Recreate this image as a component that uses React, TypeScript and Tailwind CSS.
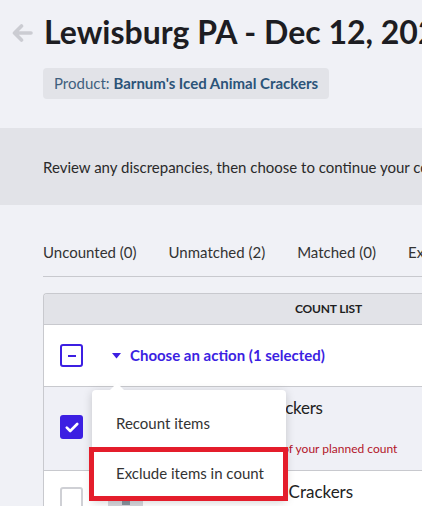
const tabs = ["Uncounted (0)", "Unmatched (2)", "Matched (0)", "Excluded (0)"];

function Check() {
  return (
    <svg width="14" height="11" viewBox="0 0 14 11" fill="none">
      <path d="M1.8 5.6 5.2 9 12.2 2" stroke="white" strokeWidth="2.6" strokeLinecap="round" strokeLinejoin="round" />
    </svg>
  );
}

export default function App() {
  return (
    <div className="relative h-[506px] w-[422px] overflow-hidden bg-[#f0f1f6] text-[#333] [font-family:Lato,sans-serif]">
      <header className="mt-[12px] flex h-[40px] items-center overflow-hidden whitespace-nowrap">
        <svg className="ml-[12px] mr-[11px] mt-[2px] shrink-0" width="21" height="18" viewBox="0 0 21 18" fill="none">
          <path d="M19 9H3M9.5 2 2.5 9l7 7" stroke="#cbccd2" strokeWidth="3.6" strokeLinecap="round" strokeLinejoin="round" />
        </svg>
        <h1 className="text-[32px] font-bold leading-[40px] text-[#1d1d22]">Lewisburg PA - Dec 12, 2023</h1>
      </header>

      <div className="ml-[43px] mt-[16px] inline-flex h-[31px] items-center rounded-[4px] bg-[#e2e3e8] px-[11px] text-[15px] whitespace-nowrap text-[#3f5f7e]">
        Product:&nbsp;<span className="font-bold text-[#2c5479]">Barnum's Iced Animal Crackers</span>
      </div>

      <section className="mt-[29px] h-[77px] overflow-hidden bg-[#e2e3e8] pl-[43px] pt-[29px] text-[15px] leading-[20px] whitespace-nowrap text-[#2a2a2a]">
        Review any discrepancies, then choose to continue your count or finish.
      </section>

      <nav className="ml-[43px] mt-[37px] flex gap-[32px] overflow-hidden border-b border-[#c8c9ce] pb-[14px] text-[15px] leading-[20px] whitespace-nowrap text-[#333]">
        {tabs.map((t) => (
          <span key={t}>{t}</span>
        ))}
      </nav>

      <div className="ml-[43px] mt-[16px] w-[420px] overflow-hidden rounded-tl-[4px] border-l border-t border-[#c8c9ce]">
        <div className="flex h-[31px] items-center border-b border-[#c8c9ce] bg-[#e2e3e8] pl-[251px] text-[12px] font-bold tracking-[-0.2px] text-[#1e1e1e]">
          COUNT LIST
        </div>

        <div className="flex h-[62px] items-center border-b border-[#c8c9ce] bg-white pl-[16px]">
          <span className="flex h-[23px] w-[23px] items-center justify-center rounded-[3px] border-2 border-[#3c1fe2]">
            <span className="h-[2px] w-[8px] bg-[#3c1fe2]" />
          </span>
          <svg className="ml-[29px] mr-[9px]" width="9" height="6" viewBox="0 0 9 6">
            <path d="M0 0h9L4.5 5.5z" fill="#3c1fe2" />
          </svg>
          <span className="text-[15px] font-bold text-[#3c1fe2]">Choose an action (1 selected)</span>
        </div>

        <div className="flex h-[84px] border-b border-[#c8c9ce] bg-[#eff0f6] pl-[16px]">
          <span className="mt-[28px] flex h-[24px] w-[23px] items-center justify-center rounded-[3px] bg-[#3c1fe2]">
            <Check />
          </span>
          <span className="ml-[25px] mt-[13px] h-[35px] w-[35px] rounded-[3px] bg-[#d6d7dc]" />
          <div className="ml-[12px] flex flex-col whitespace-nowrap">
            <span className="mt-[10px] text-[17px] leading-[22px] tracking-[-0.25px] text-[#222]">Barnum's Iced Crackers</span>
            <span className="ml-[12px] mt-[21px] text-[12px] leading-[18px] text-[#b3152a]">Count is outside 10% of your planned count</span>
          </div>
        </div>

        <div className="flex h-[60px] bg-white pl-[16px]">
          <span className="mt-[16px] h-[24px] w-[23px] rounded-[3px] border-2 border-[#cfd0d5] bg-white" />
          <span className="ml-[25px] mt-[23px] flex h-[35px] w-[35px] justify-center rounded-[3px] bg-[#d6d7dc] pt-[5px]">
            <span className="h-[6px] w-[8px] bg-[#8a949e]" />
          </span>
          <span className="ml-[17px] mt-[10px] text-[17px] leading-[22px] whitespace-nowrap text-[#222]">Barnum's Animal Crackers</span>
        </div>
      </div>

      <div className="absolute left-[92px] top-[390px] w-[194px] rounded-[4px] bg-white pt-[8px] pb-[2px] shadow-[0_2px_10px_rgba(0,0,0,0.18)]">
        <span className="absolute -top-[7px] left-[17px] h-0 w-0 border-x-[8px] border-b-[8px] border-x-transparent border-b-white" />
        <div className="flex h-[50px] items-center pl-[24px] text-[15px] text-[#333]">Recount items</div>
        <div className="flex h-[50px] items-center pl-[24px] text-[15px] text-[#333]">Exclude items in count</div>
      </div>
      <div className="absolute left-[89px] top-[447px] h-[54px] w-[199px] border-[5px] border-[#e41d2b]" />
    </div>
  );
}
